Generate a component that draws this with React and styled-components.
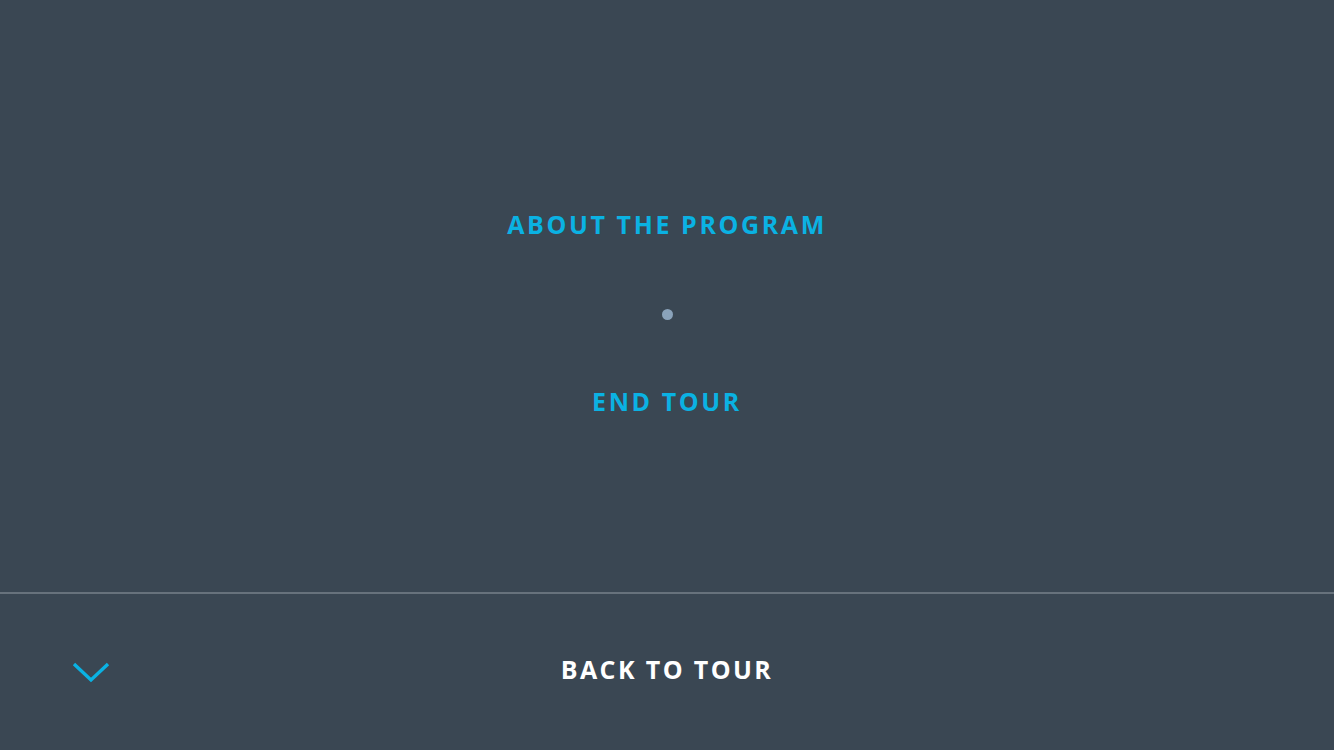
import React from 'react';
import styled, { createGlobalStyle } from 'styled-components';

const GlobalStyle = createGlobalStyle`
  html, body {
    margin: 0;
    padding: 0;
    background: #3a4753;
  }
  * { box-sizing: border-box; }
`;

const App = () => {
  return (
    <Page>
      <GlobalStyle />
      <MenuArea>
        <MenuLink>ABOUT THE PROGRAM</MenuLink>
        <Dot />
        <MenuLink>END TOUR</MenuLink>
      </MenuArea>
      <BottomBar>
        <Chevron width="38" height="22" viewBox="0 0 38 22">
          <polyline points="2,2 19,18 36,2" fill="none" stroke="#0ab2e3" strokeWidth="3.4" />
        </Chevron>
        <BackLabel>BACK TO TOUR</BackLabel>
      </BottomBar>
    </Page>
  );
};

export default App;

const Page = styled.div`
  width: 1334px;
  height: 750px;
  display: flex;
  flex-direction: column;
  background: #3a4753;
  font-family: "Open Sans", "Liberation Sans", sans-serif;
`;

const MenuArea = styled.div`
  height: 594px;
  display: flex;
  flex-direction: column;
  align-items: center;
  padding-top: 206px;
  border-bottom: 2px solid #67727c;
`;

const MenuLink = styled.a`
  font-size: 25px;
  font-weight: 700;
  letter-spacing: 2.6px;
  color: #0ab2e3;
  line-height: 36px;
  cursor: pointer;
`;

const Dot = styled.span`
  width: 11px;
  height: 11px;
  border-radius: 50%;
  background: #8aa3ba;
  margin: 67px 0 63px;
`;

const BottomBar = styled.div`
  flex: 1;
  position: relative;
  display: flex;
  align-items: center;
  justify-content: center;
  padding-bottom: 6px;
`;

const Chevron = styled.svg`
  position: absolute;
  left: 72px;
  top: 68px;
`;

const BackLabel = styled.span`
  font-size: 25px;
  font-weight: 700;
  letter-spacing: 2.4px;
  color: #ffffff;
`;
